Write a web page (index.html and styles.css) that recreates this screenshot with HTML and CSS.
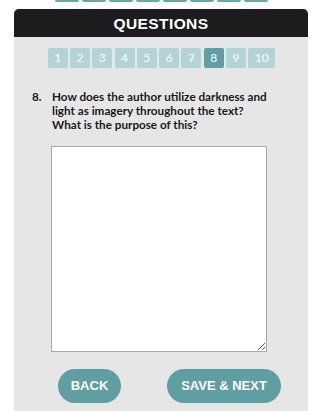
FILE: index.html
```html
<!DOCTYPE html>
<html>
<head>
<meta charset="utf-8">
<link rel="stylesheet" href="styles.css">
</head>
<body>
<div class="tabs">
  <span></span><span></span><span></span><span></span><span></span><span></span><span></span><span></span>
</div>
<div class="panel">
  <div class="header">QUESTIONS</div>
  <div class="nav">
    <span class="num">1</span><span class="num">2</span><span class="num">3</span><span class="num">4</span><span class="num">5</span><span class="num">6</span><span class="num">7</span><span class="num active">8</span><span class="num">9</span><span class="num wide">10</span>
  </div>
  <div class="question">
    <span class="qnum">8.</span>
    <span class="qtext">How does the author utilize darkness and light as imagery throughout the text? What is the purpose of this?</span>
  </div>
  <textarea class="answer"></textarea>
  <div class="actions">
    <button class="btn back">BACK</button>
    <button class="btn next">SAVE &amp; NEXT</button>
  </div>
</div>
</body>
</html>
```

FILE: styles.css
```css
html, body {
  margin: 0;
  padding: 0;
  background: #ffffff;
  height: 411px;
  overflow: hidden;
}
.tabs {
  display: flex;
  justify-content: center;
  gap: 3px;
  height: 2px;
  padding-left: 2px;
}
.tabs span {
  width: 24px;
  height: 2px;
  background: #6aa7ac;
  border-radius: 0 0 2px 2px;
}
.panel {
  margin: 7px 12px 0 14px;
  background: #e6e6e6;
  height: 402px;
}
.header {
  height: 28px;
  background: #1c1c1e;
  border-radius: 5px 5px 0 0;
  color: #ffffff;
  font-family: "Liberation Sans", Arial, sans-serif;
  font-weight: bold;
  font-size: 15.5px;
  letter-spacing: 0.4px;
  line-height: 29px;
  text-align: center;
}
.nav {
  display: flex;
  justify-content: center;
  gap: 2.3px;
  padding-top: 11px;
  padding-left: 1px;
}
.num {
  width: 20px;
  height: 20px;
  border-radius: 2px;
  background: #b2d4d7;
  color: #ffffff;
  font-family: Lato, sans-serif;
  font-size: 12px;
  line-height: 20px;
  text-align: center;
}
.num.wide {
  width: 27px;
}
.num.active {
  background: #5f9ea3;
}
.question {
  display: flex;
  margin-top: 20.5px;
  padding-left: 18px;
  font-family: Lato, sans-serif;
  font-weight: bold;
  font-size: 11.7px;
  line-height: 14.2px;
  color: #1a1a1a;
}
.qnum {
  width: 20px;
  flex: none;
}
.qtext {
  width: 217px;
}
.answer {
  display: block;
  box-sizing: border-box;
  margin: 14.5px 0 0 37px;
  width: 216px;
  height: 206px;
  border: 1px solid #a9a9a9;
  background: #ffffff;
  padding: 2px;
  font-family: Lato, sans-serif;
}
.actions {
  display: flex;
  gap: 46px;
  padding-left: 44px;
  margin-top: 17px;
}
.btn {
  height: 34px;
  border: none;
  border-radius: 17px;
  background: #5f9ea3;
  color: #ffffff;
  font-family: "Liberation Sans", Arial, sans-serif;
  font-weight: bold;
  font-size: 13px;
  padding: 0;
}
.back {
  width: 63px;
}
.next {
  width: 114px;
}
```
